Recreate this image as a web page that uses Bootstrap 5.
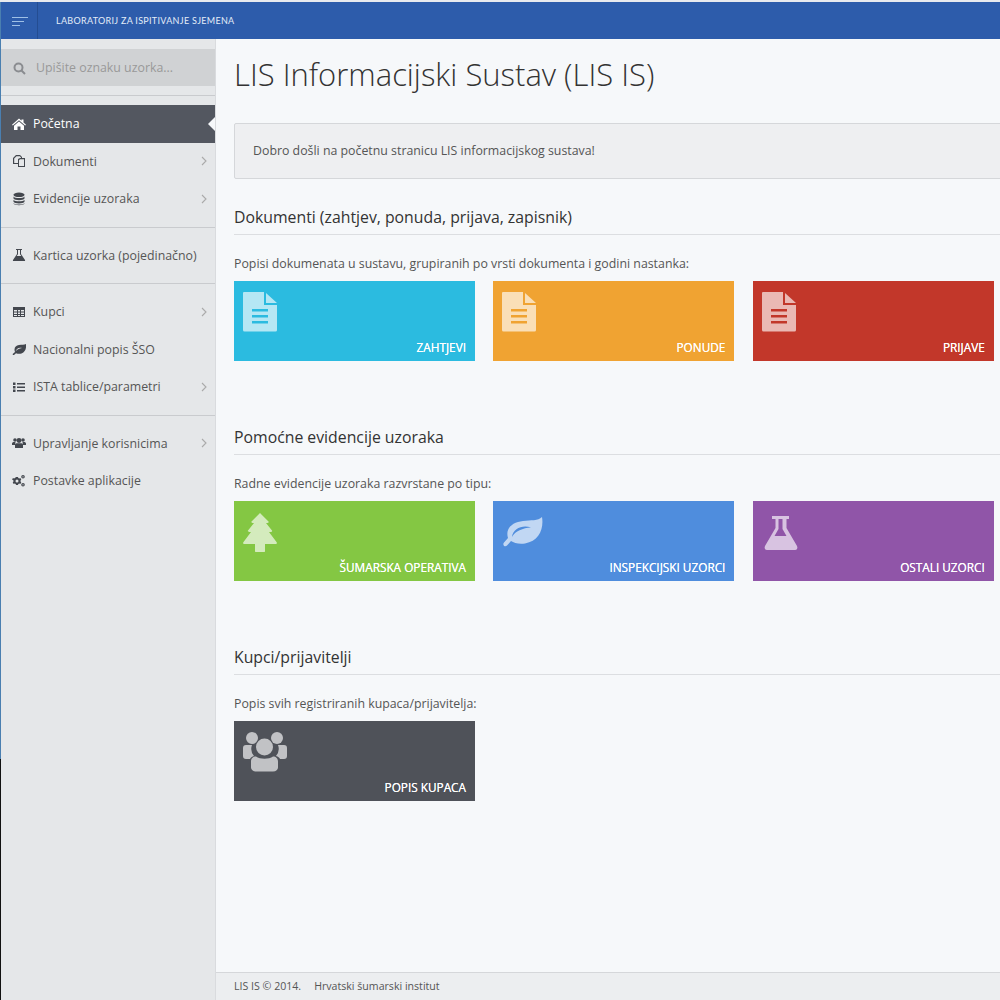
<!DOCTYPE html>
<html lang="hr">
<head>
  <meta charset="UTF-8">
  <title>LIS Informacijski Sustav</title>
  <link href="https://cdn.jsdelivr.net/npm/bootstrap@5.3.0/dist/css/bootstrap.min.css" rel="stylesheet">
  <style>
    html, body { height: 1000px; overflow: hidden; }
    body { background-color: #f6f8fa; color: #555; font-family: "Open Sans", sans-serif; font-size: 12.35px; }
    .page { height: 1000px; width: 1000px; border-top: 2px solid #e8eaee; padding-left: 1px; background: linear-gradient(#4a7fb0 757px, #111 757px) left top / 1px 100% no-repeat; }
    .topbar { height: 37px; background-color: #2d5cab; }
    .toggle { width: 37px; height: 37px; border-right: 1px solid #244d92; padding: 0 9px 0 11px; }
    .toggle span { display: block; height: 1px; background-color: #9fc0e6; margin-bottom: 3px; }
    .brand { font-family: "Lato", sans-serif; font-size: 9px; color: #e4edf8; letter-spacing: .3px; margin-left: 18px; }
    .sidebar { width: 215px; height: 961px; flex: none; background-color: #e5e7e9; border-right: 1px solid #d9dbde; padding-top: 10px; }
    .search { height: 37px; background-color: #d0d2d4; color: #999; padding: 1px 0 0 12px; gap: 10px; }
    .sidebar hr { margin: 0; border-color: #c9cbce; opacity: 1; }
    .sidebar hr.group-a { margin-top: 9px; }
    .side-item { height: 37.5px; padding: 2px 8px 0 11px; color: #555; text-decoration: none; position: relative; white-space: nowrap; }
    .side-item svg.ico { width: 14px; height: 14px; flex: none; margin: -2px 7px 0 0; fill: #43474e; }
    .side-item.active { background-color: #535760; color: #fff; }
    .side-item.active svg.ico { fill: #fff; }
    .side-item.active::after { content: ""; position: absolute; right: 0; top: 12px; border: 7px solid transparent; border-right-color: #f6f8fa; border-left: 0; }
    .side-item .chev { margin: -2px 0 0 auto; width: 6px; height: 10px; fill: none; stroke: #aaa; stroke-width: 1.1; }
    .group-a { margin-top: 9px; }
    .group-b { padding-top: 9px; }
    .content-col { height: 961px; }
    .main { padding: 0 0 0 18px; width: 790px; flex: none; }
    h1.title { font-weight: 300; font-size: 31px; color: #333; margin: 15px 0 29px; line-height: 40px; white-space: nowrap; }
    .well-box { width: 800px; height: 56px; background-color: #eeeff1; border: 1px solid #d5d7da; border-radius: 2px; padding: 1px 0 0 18px; margin-bottom: 26px; }
    h2.sec { font-size: 15.8px; font-weight: 400; color: #333; width: 800px; border-bottom: 1px solid #dcdee1; height: 30px; line-height: 24px; margin: 0 0 20px; }
    .sec-note { margin: 0 0 8px; line-height: 18px; }
    .tiles { gap: 18.4px; margin-bottom: 64px; }
    .tile { width: 241px; height: 80px; color: #fff; position: relative; text-decoration: none; font-size: 11.8px; font-weight: 500; text-shadow: 0 0 .4px currentColor; }
    .tile svg { position: absolute; left: 9px; top: 11px; width: 34px; height: 40px; fill: rgba(255,255,255,.65); }
    .tile svg.ic-tree { top: 12px; height: 39px; }
    .tile svg.ic-leaf { left: 10px; top: 15px; width: 41px; height: 31px; }
    .tile svg.ic-flask { left: 11px; top: 15px; width: 34px; height: 34px; }
    .tile svg.ic-users { top: 11px; width: 44px; height: 40px; }
    .tile span { position: absolute; right: 9px; bottom: 4px; }
    .c-cyan { background-color: #2bbbe0; }
    .c-orange { background-color: #f0a332; }
    .c-red { background-color: #c2372a; }
    .c-green { background-color: #84c743; }
    .c-blue { background-color: #4f8ddd; }
    .c-purple { background-color: #9055a8; }
    .c-dark { background-color: #4f5259; }
    .footer-bar { height: 28px; width: 785px; background-color: #eceef0; border-top: 1px solid #d5d7da; font-size: 10.6px; padding-left: 18px; gap: 13px; }
  </style>
</head>
<body>

<svg width="0" height="0" class="position-absolute">
  <symbol id="i-doc" viewBox="0 0 34 40"><path fill-rule="evenodd" d="M1 0h20v13h13v25a1.500 1.500 0 0 1-1.500 1.500h-31A1.500 1.500 0 0 1 0 38V1a1 1 0 0 1 1-1zM23 1l11 10H23zM9 17v2.500h16V17zM9 23v2.500h16V23zM9 29v2.500h16V29z"/></symbol>
  <symbol id="i-tree" viewBox="0 0 34 39"><path d="M17 0l8.500 8.500c.5.800 0 1.500-1 1.500h-1.500l6 7.500c.5.800 0 1.500-1 1.500H26l7.500 10c.8 1 .3 2-1 2H22v7c0 .8-.5 1.500-1.500 1.500h-7c-1 0-1.500-.7-1.500-1.500v-7H1.500c-1.300 0-1.800-1-1-2L8 19H6c-1 0-1.500-.7-1-1.500L11 10H9.500c-1 0-1.500-.7-1-1.500z"/></symbol>
  <symbol id="i-leaf" viewBox="0 0 41 31"><path fill-rule="evenodd" d="M39 1C41 13 36 25 22 27.500 16 28.500 11 27 8 25l-4 4.500C2 31.500-1 29 1 26.500L5 22C2 12 10 6 20 5 28 4 35 5 39 1zM9 21c3-6 11-9 19-9.500C20 8.500 10 12 9 21z"/></symbol>
  <symbol id="i-flask" viewBox="0 0 34 34"><path fill-rule="evenodd" d="M8 0h17v3h-2.500v9l10.500 18c1 2 0 4-2 4H3c-2 0-3-2-2-4l10.500-18V3H8zM14.500 3v10l-4 7h12l-4-7V3z"/></symbol>
  <symbol id="i-users" viewBox="0 0 44 40"><circle cx="9" cy="6" r="6"/><circle cx="34" cy="6" r="6"/><path d="M3 13h6a11 11 0 0 0 2 11c-2 .5-3.500 1.500-4 3H3c-2 0-3-1-3-3v-8c0-2 1-3 3-3zM41 13h-6a11 11 0 0 1-2 11c2 .5 3.500 1.500 4 3h4c2 0 3-1 3-3v-8c0-2-1-3-3-3z"/><circle cx="21.500" cy="15" r="8.500"/><path d="M13 24.500c4 3 13 3 17 0 3 0 5 2 5 5v6c0 2-2 4-5 4H13c-3 0-5-2-5-4v-6c0-3 2-5 5-5z"/></symbol>
  <symbol id="s-home" viewBox="0 0 14 14"><path d="M7 1.500l2.500 2.200V2.500h2v3l2.500 2.200-.8.900L7 3.200 .8 8.600 0 7.700zM7 4.500l5 4.300V13H8.500V9.500h-3V13H2V8.800z"/></symbol>
  <symbol id="s-copy" viewBox="0 0 14 14"><path fill-rule="evenodd" d="M4 1h4l2 2v1h3v9H6v-3H1V4zM4.500 2.200 2.200 4.500V9H6V5l2-1h1V3.500L7.800 2.200zM8 5.200 7 6.200V12h5V5.200z"/></symbol>
  <symbol id="s-db" viewBox="0 0 14 14"><ellipse cx="7" cy="2.800" rx="5.500" ry="2.300"/><path d="M1.500 4.500c1 2 10 2 11 0v2c-1 2.300-10 2.300-11 0zM1.500 7.800c1 2 10 2 11 0v2c-1 2.300-10 2.300-11 0zM1.500 11c1 2 10 2 11 0v.5c-1 2.300-10 2.300-11 0z"/></symbol>
  <symbol id="s-flask" viewBox="0 0 14 14"><path fill-rule="evenodd" d="M4 1h6v1H9v4l4 6c.3.600 0 1-.5 1h-11c-.5 0-.8-.4-.5-1l4-6V2H4zM6 2v4.300L4.700 8h4.600L8 6.300V2z"/></symbol>
  <symbol id="s-table" viewBox="0 0 14 14"><path fill-rule="evenodd" d="M1 2h12v10H1zM2 5v1.500h3V5zM6 5v1.500h2V5zM9 5v1.500h3V5zM2 7.500V9h3V7.500zM6 7.500V9h2V7.500zM9 7.500V9h3V7.500zM2 10v1h3v-1zM6 10v1h2v-1zM9 10v1h3v-1z"/></symbol>
  <symbol id="s-leaf" viewBox="0 0 14 14"><path fill-rule="evenodd" d="M14 2c.5 4-.5 8-4.500 9.500-2 .7-4 .3-5.500-.3L2 13c-.7.4-1.700-.3-1.300-1L3 10C1.500 6 3.500 3.500 7 3c2.700-.3 5.300-.3 7-1zM3.500 9.500c1.300-2 3.500-3 6.500-3.500-3-1-5.500.5-6.500 3.500z"/></symbol>
  <symbol id="s-list" viewBox="0 0 14 14"><path d="M1 2.500h2.500V5H1zM1 6h2.500v2.500H1zM1 9.500h2.500V12H1zM5 3h8v1.500H5zM5 6.500h8V8H5zM5 10h8v1.500H5z"/></symbol>
  <symbol id="s-users" viewBox="0 0 14 14"><circle cx="3" cy="4" r="1.800"/><circle cx="11" cy="4" r="1.800"/><circle cx="7" cy="4.500" r="2.400"/><path d="M0 7.500C0 6.500 1 6 2 6h1.500L3 9H0zM14 7.500c0-1-1-1.500-2-1.500h-1.500L11 9h3zM4.500 7.300h5c1 0 1.500 1 1.500 2V12H3V9.300c0-1 .5-2 1.500-2z"/></symbol>
  <symbol id="s-gears" viewBox="0 0 14 14"><path fill-rule="evenodd" d="M4 3h2l.3 1 1 .5 1-.5 1 1.500-.7.800v1.400l.7.800-1 1.500-1-.5-1 .5L6 11H4l-.3-1-1-.5-1 .5-1-1.500.7-.8V6.300L0 5.500l1-1.500 1 .5 1-.5zM5 5.500a1.500 1.500 0 1 0 0 3 1.500 1.500 0 0 0 0-3z"/><path fill-rule="evenodd" d="M11 1a1.800 1.800 0 1 1 0 3.600A1.800 1.800 0 0 1 11 1zm0 1.200a.6.600 0 1 0 0 1.200.6.600 0 0 0 0-1.200zM11 9a1.800 1.800 0 1 1 0 3.600A1.800 1.800 0 0 1 11 9zm0 1.200a.6.600 0 1 0 0 1.200.6.600 0 0 0 0-1.200z"/></symbol>
</svg>

<div class="page">
  <div class="topbar d-flex align-items-center">
    <div class="toggle d-flex flex-column justify-content-center pt-1">
      <span></span><span class="me-1"></span><span class="me-2"></span>
    </div>
    <div class="brand text-uppercase">Laboratorij za ispitivanje sjemena</div>
  </div>

  <div class="d-flex">
    <div class="sidebar">
      <div class="search d-flex align-items-center">
        <svg width="13" height="13" viewBox="0 0 13 13" fill="none" stroke="#8a8c90" stroke-width="2"><circle cx="5.500" cy="5.500" r="4"/><path d="M8.500 8.500l3.500 3.500"/></svg>
        <span>Upišite oznaku uzorka...</span>
      </div>
      <hr class="group-a">
      <div class="group-a">
        <a href="#" class="side-item active d-flex align-items-center"><svg class="ico"><use href="#s-home"/></svg>Početna</a>
        <a href="#" class="side-item d-flex align-items-center"><svg class="ico"><use href="#s-copy"/></svg>Dokumenti<svg class="chev" viewBox="0 0 6 10"><path d="M1 1l4 4-4 4"/></svg></a>
        <a href="#" class="side-item d-flex align-items-center"><svg class="ico"><use href="#s-db"/></svg>Evidencije uzoraka<svg class="chev" viewBox="0 0 6 10"><path d="M1 1l4 4-4 4"/></svg></a>
      </div>
      <hr class="group-a">
      <div class="group-b">
        <a href="#" class="side-item d-flex align-items-center"><svg class="ico"><use href="#s-flask"/></svg>Kartica uzorka (pojedinačno)</a>
      </div>
      <hr class="group-a">
      <div class="group-b">
        <a href="#" class="side-item d-flex align-items-center"><svg class="ico"><use href="#s-table"/></svg>Kupci<svg class="chev" viewBox="0 0 6 10"><path d="M1 1l4 4-4 4"/></svg></a>
        <a href="#" class="side-item d-flex align-items-center"><svg class="ico"><use href="#s-leaf"/></svg>Nacionalni popis ŠSO</a>
        <a href="#" class="side-item d-flex align-items-center"><svg class="ico"><use href="#s-list"/></svg>ISTA tablice/parametri<svg class="chev" viewBox="0 0 6 10"><path d="M1 1l4 4-4 4"/></svg></a>
      </div>
      <hr class="group-a">
      <div class="group-b">
        <a href="#" class="side-item d-flex align-items-center"><svg class="ico"><use href="#s-users"/></svg>Upravljanje korisnicima<svg class="chev" viewBox="0 0 6 10"><path d="M1 1l4 4-4 4"/></svg></a>
        <a href="#" class="side-item d-flex align-items-center"><svg class="ico"><use href="#s-gears"/></svg>Postavke aplikacije</a>
      </div>
    </div>

    <div class="content-col d-flex flex-column">
      <div class="main flex-grow-1">
        <h1 class="title">LIS Informacijski Sustav (LIS IS)</h1>
        <div class="well-box d-flex align-items-center">Dobro došli na početnu stranicu LIS informacijskog sustava!</div>

        <h2 class="sec">Dokumenti (zahtjev, ponuda, prijava, zapisnik)</h2>
        <p class="sec-note">Popisi dokumenata u sustavu, grupiranih po vrsti dokumenta i godini nastanka:</p>
        <div class="tiles d-flex">
          <a href="#" class="tile c-cyan"><svg><use href="#i-doc"/></svg><span>ZAHTJEVI</span></a>
          <a href="#" class="tile c-orange"><svg><use href="#i-doc"/></svg><span>PONUDE</span></a>
          <a href="#" class="tile c-red"><svg><use href="#i-doc"/></svg><span>PRIJAVE</span></a>
        </div>

        <h2 class="sec">Pomoćne evidencije uzoraka</h2>
        <p class="sec-note">Radne evidencije uzoraka razvrstane po tipu:</p>
        <div class="tiles d-flex">
          <a href="#" class="tile c-green"><svg class="ic-tree"><use href="#i-tree"/></svg><span>ŠUMARSKA OPERATIVA</span></a>
          <a href="#" class="tile c-blue"><svg class="ic-leaf"><use href="#i-leaf"/></svg><span>INSPEKCIJSKI UZORCI</span></a>
          <a href="#" class="tile c-purple"><svg class="ic-flask"><use href="#i-flask"/></svg><span>OSTALI UZORCI</span></a>
        </div>

        <h2 class="sec">Kupci/prijavitelji</h2>
        <p class="sec-note">Popis svih registriranih kupaca/prijavitelja:</p>
        <div class="tiles d-flex">
          <a href="#" class="tile c-dark"><svg class="ic-users"><use href="#i-users"/></svg><span>POPIS KUPACA</span></a>
        </div>
      </div>
      <div class="footer-bar d-flex align-items-center"><span>LIS IS © 2014.</span><span>Hrvatski šumarski institut</span></div>
    </div>
  </div>
</div>

</body>
</html>
